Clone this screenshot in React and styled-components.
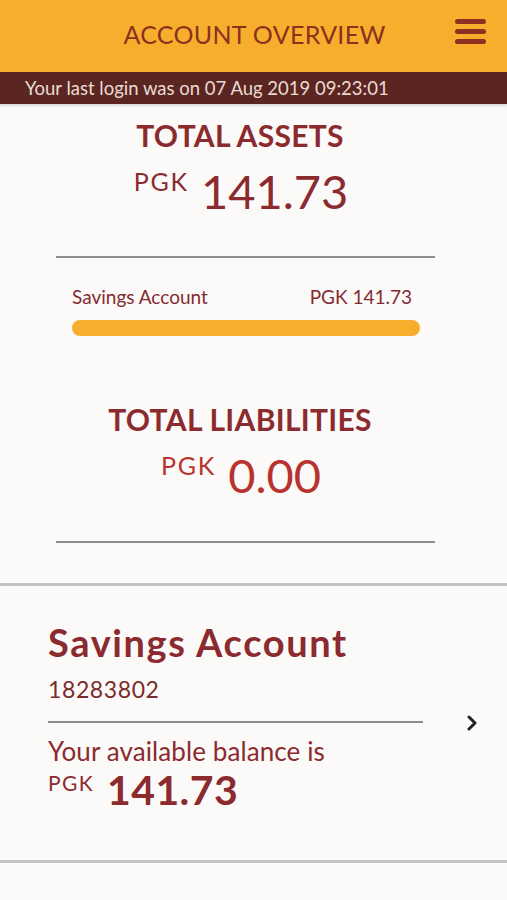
import React from "react";
import styled, { createGlobalStyle } from "styled-components";

const GlobalStyle = createGlobalStyle`
  body {
    margin: 0;
    background: #fbfaf8;
    font-family: Lato, "Open Sans", sans-serif;
  }
`;

const Page = styled.div`
  width: 507px;
  height: 900px;
  overflow: hidden;
  display: flex;
  flex-direction: column;
  background: #fbfaf8;
`;

const Header = styled.div`
  height: 72px;
  background: #f8ae2d;
  display: flex;
  align-items: center;
  justify-content: center;
  position: relative;
`;

const Title = styled.div`
  color: #8a3220;
  font-size: 25px;
  letter-spacing: 0.3px;
  margin: 0 0 4px 2px;
`;

const Burger = styled.div`
  position: absolute;
  right: 21px;
  top: 19px;
  display: flex;
  flex-direction: column;
  gap: 5px;

  span {
    display: block;
    width: 31px;
    height: 5px;
    border-radius: 3px;
    background: #8e2f22;
  }
`;

const LoginBar = styled.div`
  height: 32px;
  background: #5b2622;
  color: #eadbd3;
  font-size: 18.5px;
  display: flex;
  align-items: center;
  padding-left: 25px;
  box-shadow: 0 2px 2px rgba(0, 0, 0, 0.12);
`;

const Summary = styled.div`
  margin: 0 72px 0 56px;
  display: flex;
  flex-direction: column;
  align-items: center;
`;

const Heading = styled.div`
  color: #8b2a2f;
  font-size: 30px;
  font-weight: 700;
  letter-spacing: 0.3px;
  line-height: 34px;
  margin-top: ${(p) => p.$top}px;
  margin-right: 11px;
`;

const Amount = styled.div`
  display: flex;
  align-items: flex-start;
  gap: 12px;
  color: ${(p) => p.$color};
  margin: 14px 9px 0 0;
`;

const Currency = styled.span`
  font-size: 25px;
  line-height: 30px;
  letter-spacing: 1.8px;
`;

const Figure = styled.span`
  font-size: 47px;
  line-height: 50px;
`;

const Rule = styled.div`
  height: 2px;
  background: #8d8d8d;
  align-self: stretch;
  margin-top: ${(p) => p.$top}px;
`;

const BreakdownRow = styled.div`
  align-self: stretch;
  margin: 27px 23px 0 16px;
  display: flex;
  justify-content: space-between;
  color: #842a32;
  font-size: 19px;
  line-height: 23px;
`;

const Bar = styled.div`
  align-self: stretch;
  margin: 12px 15px 0 16px;
  height: 16px;
  border-radius: 8px;
  background: #f8ae2d;
`;

const FullRule = styled.div`
  height: 3px;
  background: #c4c2c0;
  margin-top: ${(p) => p.$top}px;
`;

const Card = styled.div`
  display: flex;
  align-items: center;
  padding: 0 28px 0 48px;
  height: 274px;
`;

const CardBody = styled.div`
  flex: 1;
  align-self: flex-start;
  padding-top: 34px;
  color: #8b2a2f;
`;

const AccountName = styled.div`
  font-size: 38px;
  font-weight: 700;
  line-height: 44px;
  letter-spacing: 1.6px;
`;

const AccountNumber = styled.div`
  font-size: 23px;
  line-height: 28px;
  letter-spacing: 0.6px;
  color: #7a2b2b;
  margin-top: 11px;
`;

const BalanceLabel = styled.div`
  font-size: 26px;
  line-height: 30px;
  letter-spacing: 0.1px;
  margin-top: 13px;
`;

const BalanceRow = styled.div`
  display: flex;
  align-items: flex-start;
  gap: 13px;
  margin-top: 2px;
`;

const SmallCurrency = styled.span`
  font-size: 21px;
  line-height: 25px;
  letter-spacing: 1.4px;
  margin-top: 2px;
`;

const BalanceFigure = styled.span`
  font-size: 41px;
  font-weight: 700;
  line-height: 44px;
  letter-spacing: 0.4px;
`;

const Chevron = styled.svg`
  margin-left: 42px;
  flex-shrink: 0;
`;

export default function App() {
  return (
    <Page>
      <GlobalStyle />
      <Header>
        <Title>ACCOUNT OVERVIEW</Title>
        <Burger>
          <span />
          <span />
          <span />
        </Burger>
      </Header>
      <LoginBar>Your last login was on 07 Aug 2019 09:23:01</LoginBar>

      <Summary>
        <Heading $top={14}>TOTAL ASSETS</Heading>
        <Amount $color="#8b2a2f">
          <Currency>PGK</Currency>
          <Figure>141.73</Figure>
        </Amount>
        <Rule $top={40} />
        <BreakdownRow>
          <span>Savings Account</span>
          <span>PGK 141.73</span>
        </BreakdownRow>
        <Bar />
        <Heading $top={66}>TOTAL LIABILITIES</Heading>
        <Amount $color="#b8332f">
          <Currency>PGK</Currency>
          <Figure>0.00</Figure>
        </Amount>
        <Rule $top={41} />
      </Summary>

      <FullRule $top={40} />

      <Card>
        <CardBody>
          <AccountName>Savings Account</AccountName>
          <AccountNumber>18283802</AccountNumber>
          <Rule $top={18} />
          <BalanceLabel>Your available balance is</BalanceLabel>
          <BalanceRow>
            <SmallCurrency>PGK</SmallCurrency>
            <BalanceFigure>141.73</BalanceFigure>
          </BalanceRow>
        </CardBody>
        <Chevron width="14" height="16" viewBox="0 0 14 16">
          <path
            d="M4 2 L10 8 L4 14"
            fill="none"
            stroke="#222"
            strokeWidth="3"
            strokeLinecap="round"
            strokeLinejoin="round"
          />
        </Chevron>
      </Card>

      <FullRule $top={0} />
    </Page>
  );
}
